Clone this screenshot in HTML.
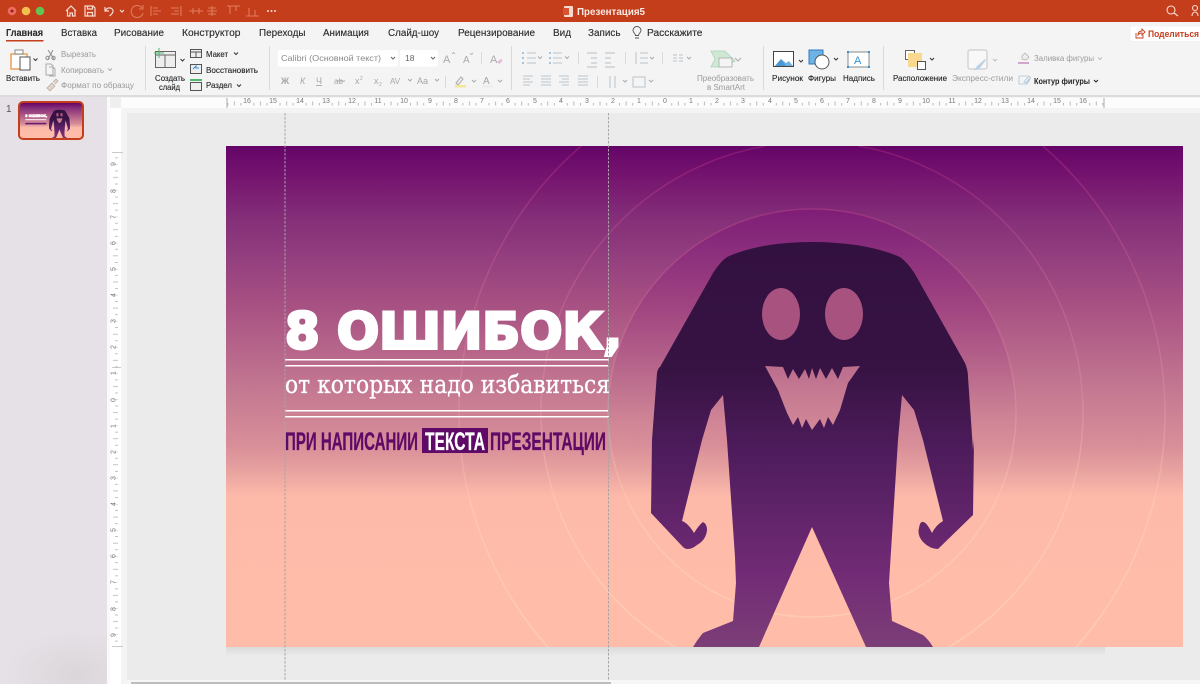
<!DOCTYPE html>
<html><head><meta charset="utf-8"><title>Презентация5</title>
<style>
html,body{margin:0;padding:0;width:1200px;height:684px;overflow:hidden;background:#ebebeb}
svg{display:block}
text{font-family:"Liberation Sans","Noto Sans CJK SC",sans-serif}
.t{font-size:10px;fill:#2a2a2a;stroke:#2a2a2a;stroke-width:.12}
.l{font-size:8px;fill:#222;stroke:#222;stroke-width:.1}
.g{font-size:8px;fill:#9a9a9a}
.n{font-size:7px;fill:#777}
.i{fill:none;stroke:#8f8f8f;stroke-width:1}
.b{fill:none;stroke:#b9c3cc;stroke-width:1}
</style></head><body>
<svg width="1200" height="684" viewBox="0 0 1200 684" xmlns="http://www.w3.org/2000/svg">
<defs>
<linearGradient id="bg" gradientUnits="userSpaceOnUse" x1="0" y1="146" x2="0" y2="647">
<stop offset="0" stop-color="#640467"/><stop offset=".06" stop-color="#75146f"/><stop offset=".15" stop-color="#853079"/><stop offset=".24" stop-color="#974280"/><stop offset=".31" stop-color="#a64f82"/><stop offset=".5" stop-color="#c67b92"/><stop offset=".6" stop-color="#d98f99"/><stop offset=".65" stop-color="#e8a3a0"/><stop offset=".7" stop-color="#fdbaa9"/><stop offset="1" stop-color="#ffbda9"/>
</linearGradient>
<linearGradient id="mg" gradientUnits="userSpaceOnUse" x1="0" y1="242" x2="0" y2="647">
<stop offset="0" stop-color="#32103f"/><stop offset=".32" stop-color="#371343"/><stop offset=".52" stop-color="#4e1c5c"/><stop offset=".82" stop-color="#722b76"/><stop offset="1" stop-color="#7b3e77"/>
</linearGradient>
<linearGradient id="disc" gradientUnits="userSpaceOnUse" x1="0" y1="208" x2="0" y2="420">
<stop offset="0" stop-color="#7a0078" stop-opacity=".3"/><stop offset="1" stop-color="#7a0078" stop-opacity="0"/>
</linearGradient>
<linearGradient id="rg" gradientUnits="userSpaceOnUse" x1="0" y1="146" x2="0" y2="647">
<stop offset="0" stop-color="#d0408a" stop-opacity=".3"/><stop offset=".5" stop-color="#eda0b0" stop-opacity=".28"/><stop offset=".72" stop-color="#ffd0b4" stop-opacity=".5"/><stop offset="1" stop-color="#ffd2b6" stop-opacity=".75"/>
</linearGradient>
<linearGradient id="sh" x1="0" y1="0" x2="0" y2="1"><stop offset="0" stop-color="#dadada"/><stop offset="1" stop-color="#ebebeb"/></linearGradient>
<radialGradient id="sm" gradientUnits="userSpaceOnUse" cx="0" cy="0" r="1" gradientTransform="translate(75 675) scale(70 45)"><stop offset="0" stop-color="#dbd6da"/><stop offset="1" stop-color="#e6e1e6"/></radialGradient>
<pattern id="hr" patternUnits="userSpaceOnUse" x="665.3" y="98" width="26.12" height="10">
<path d="M6.53 5v2.500M13.06 3.500v4M19.59 5v2.500" stroke="#a8a8a8" stroke-width=".8" fill="none"/>
</pattern>
<pattern id="vr" patternUnits="userSpaceOnUse" x="110" y="399.5" width="12" height="26.12">
<path d="M5 6.53h3M3 13.06h5M5 19.59h3M3 0h5" stroke="#b0b0b0" stroke-width=".8" fill="none"/>
</pattern>
<clipPath id="sc"><rect x="226" y="146" width="957" height="501"/></clipPath>
</defs>

<!-- base -->
<rect width="1200" height="684" fill="#f4f4f4"/>
<rect x="0" y="97" width="107" height="587" fill="#e6e1e6"/>
<rect x="0" y="625" width="107" height="59" fill="url(#sm)"/>
<rect x="107" y="97" width="3" height="587" fill="#fafafa"/>
<rect x="110" y="97" width="11" height="11" fill="#efefef"/>
<rect x="110" y="108" width="11" height="576" fill="#fff"/>
<rect x="121" y="98" width="1079" height="10" fill="#fcfcfc"/>
<rect x="127" y="113" width="1073" height="567" fill="#ebebeb"/>
<rect x="127" y="680" width="1073" height="4" fill="#f6f6f6"/>
<rect x="131" y="682" width="480" height="2" fill="#bdbdbd"/>

<!-- title bar -->
<rect width="1200" height="22" fill="#c43e1c"/>
<circle cx="12" cy="11" r="4.3" fill="#ec6a5e"/><circle cx="12" cy="11" r="1.4" fill="#8c1d18"/>
<circle cx="26" cy="11" r="4.3" fill="#f4bf4f"/><circle cx="40" cy="11" r="4.3" fill="#61c554"/>
<g fill="none" stroke="#f7dcd2" stroke-width="1.2">
<path d="M66 11l5-5 5 5M67.5 10v6h2.5v-3h2.5v3h2.5v-6"/>
<path d="M85 6h8l2 2v8h-10zM87.5 6v3h5V6M87.5 16v-3.5h5V16"/>
<path d="M105 7v4h4M105.5 10.5c2-4 8-3 7.5 1c-.3 2-2 3-3.500 4.500"/>
<path d="M120 10l2 2 2-2"/>
</g>
<g fill="none" stroke="#e07a5d" stroke-width="1.100">
<path d="M142 8a6 6 0 1 0 1 5M143 5v4h-4"/>
<path d="M151 6v10M153 8h5M153 11h8M153 14h5"/>
<path d="M181 6v10M171 8h8M174 11h5M171 14h8"/>
<path d="M189 11h14M193 8v6M199 8v6"/>
<path d="M212 6v10M208 8h8M208 14h8M207 11h10"/>
<path d="M227 6h13M230 6v8M236 6v5"/>
<path d="M246 16h13M249 8v8M255 10v6"/>
</g>
<g fill="#f7dcd2"><circle cx="268" cy="11" r="1"/><circle cx="271.500" cy="11" r="1"/><circle cx="275" cy="11" r="1"/></g>
<rect x="564" y="6" width="9" height="11" rx="1" fill="#f6d9cf"/><rect x="563" y="8" width="6" height="7" fill="#d9532e"/>
<text x="577" y="15" font-size="10" font-weight="700" fill="#fbe9e3" textLength="68" lengthAdjust="spacingAndGlyphs">Презентация5</text>
<g fill="none" stroke="#f7dcd2" stroke-width="1.100"><circle cx="1171" cy="10" r="4"/><path d="M1174 13l4 3"/><circle cx="1195" cy="8" r="2.500"/><path d="M1192 16c0-3 2-4 3-4s3 1 3 4"/></g>

<!-- ribbon -->
<rect y="22" width="1200" height="73" fill="#f4f4f4"/>
<rect y="95" width="1200" height="2" fill="#dcdcdc"/>
<text x="6" y="36" class="t" font-weight="700" textLength="37" lengthAdjust="spacingAndGlyphs">Главная</text>
<rect x="6" y="40" width="37.500" height="1.500" fill="#c43e1c"/>
<text x="61" y="36" class="t" textLength="36" lengthAdjust="spacingAndGlyphs">Вставка</text>
<text x="114" y="36" class="t" textLength="50" lengthAdjust="spacingAndGlyphs">Рисование</text>
<text x="182" y="36" class="t" textLength="58.500" lengthAdjust="spacingAndGlyphs">Конструктор</text>
<text x="259" y="36" class="t" textLength="46.500" lengthAdjust="spacingAndGlyphs">Переходы</text>
<text x="323" y="36" class="t" textLength="46" lengthAdjust="spacingAndGlyphs">Анимация</text>
<text x="388" y="36" class="t" textLength="51" lengthAdjust="spacingAndGlyphs">Слайд-шоу</text>
<text x="458" y="36" class="t" textLength="77" lengthAdjust="spacingAndGlyphs">Рецензирование</text>
<text x="553" y="36" class="t" textLength="18" lengthAdjust="spacingAndGlyphs">Вид</text>
<text x="588" y="36" class="t" textLength="32.500" lengthAdjust="spacingAndGlyphs">Запись</text>
<path d="M635 38h4M635.500 35.500c0-2-2.500-3-2.500-5a4 4 0 0 1 8 0c0 2-2.500 3-2.500 5z" fill="none" stroke="#555" stroke-width=".9"/>
<text x="647" y="36" class="t" textLength="55.500" lengthAdjust="spacingAndGlyphs">Расскажите</text>
<rect x="1130" y="26" width="72" height="15.500" rx="2" fill="#fff" stroke="#e9e9e9" stroke-width=".6"/>
<path d="M1136 33v5h7v-3M1138 35c0-3 2-4 4-4v-2l3 3-3 3v-2c-2 0-3 .5-4 2z" fill="none" stroke="#c43e1c" stroke-width=".9"/>
<text x="1148" y="37" font-size="9" font-weight="700" fill="#c43e1c" textLength="51" lengthAdjust="spacingAndGlyphs">Поделиться</text>

<g stroke="#d9d9d9" stroke-width="1"><path d="M145.500 46v44M269.500 46v44M511.500 46v44M763.500 46v44M883.500 46v44M481.500 52v12M578.500 52v12M625.500 52v12M662.500 52v12M445.500 76v12M597.500 76v12"/></g>

<!-- paste -->
<path d="M11 54h16v15H11z" fill="#fff" stroke="#e8a25a" stroke-width="1.500"/>
<rect x="15" y="50" width="8" height="4" fill="#fff" stroke="#888"/>
<rect x="20" y="57" width="10" height="13" fill="#fff" stroke="#555"/>
<path d="M33.500 58.500l2 2 2-2" fill="none" stroke="#333"/>
<text x="6" y="81" class="l" textLength="34" lengthAdjust="spacingAndGlyphs">Вставить</text>
<path d="M48 50l6 9M53 50l-5 9" class="i"/><circle cx="47.500" cy="58" r="1.700" class="i"/><circle cx="53.500" cy="58" r="1.700" class="i"/>
<path d="M46 64h5l2 2v9h-7zM49 67h4l2 2v7h-6" fill="none" stroke="#aaa"/>
<path d="M47 88l5-5 3 3-5 5zM53 82l3-3 2 2-3 3" fill="#e6d4c4" stroke="#aaa" stroke-width=".7"/>
<text x="61" y="57" class="g" textLength="35" lengthAdjust="spacingAndGlyphs">Вырезать</text>
<text x="61" y="73" class="g" textLength="43" lengthAdjust="spacingAndGlyphs">Копировать</text>
<path d="M108 68.500l2 2 2-2" fill="none" stroke="#aaa"/>
<text x="61" y="88" class="g" textLength="73" lengthAdjust="spacingAndGlyphs">Формат по образцу</text>

<!-- new slide -->
<rect x="155.500" y="51.500" width="20" height="16" fill="#eee" stroke="#666"/><path d="M155 55h21M165 55v12" stroke="#666" fill="none"/>
<path d="M159 48v10M154 53h10" stroke="#4fb86a" stroke-width="1" fill="none"/>
<path d="M180.500 59l2 2 2-2" fill="none" stroke="#333"/>
<text x="155" y="81" class="l" textLength="30" lengthAdjust="spacingAndGlyphs">Создать</text>
<text x="159" y="90" class="l" textLength="21" lengthAdjust="spacingAndGlyphs">слайд</text>
<rect x="190.500" y="49.500" width="11" height="8" fill="#eee" stroke="#555"/><path d="M191 52h10M196 52v5" stroke="#555" fill="none"/>
<rect x="190.500" y="64.500" width="11" height="9" fill="#eee" stroke="#555"/><path d="M193 69l3-3v2h3" stroke="#3a8fd0" fill="none"/>
<rect x="190.500" y="82.500" width="11" height="8" fill="#eee" stroke="#555"/><rect x="190" y="79" width="12" height="2" fill="#4fb86a"/>
<text x="206" y="57" class="l" textLength="22" lengthAdjust="spacingAndGlyphs">Макет</text>
<path d="M234 52.500l2 2 2-2" fill="none" stroke="#333"/>
<text x="206" y="73" class="l" textLength="52" lengthAdjust="spacingAndGlyphs">Восстановить</text>
<text x="206" y="88" class="l" textLength="26" lengthAdjust="spacingAndGlyphs">Раздел</text>
<path d="M237 84.500l2 2 2-2" fill="none" stroke="#333"/>

<!-- font -->
<rect x="278" y="50" width="120" height="16.500" rx="2" fill="#fff"/>
<text x="281" y="61" font-size="8.500" fill="#8a8a8a" textLength="100" lengthAdjust="spacingAndGlyphs">Calibri (Основной текст)</text>
<path d="M391 57l2 2 2-2" fill="none" stroke="#666"/>
<rect x="400" y="50" width="38" height="16.500" rx="2" fill="#fff"/>
<text x="405" y="61" font-size="8.500" fill="#666">18</text>
<path d="M431 57l2 2 2-2" fill="none" stroke="#666"/>
<text x="443" y="63" font-size="11" fill="#aaa">A</text><text x="463" y="63" font-size="10" fill="#aaa">A</text>
<path d="M452 54l1.500-1.500 1.500 1.500M470 53l1.500 1.500 1.500-1.500" fill="none" stroke="#aaa" stroke-width=".8"/>
<text x="490" y="63" font-size="11" fill="#aaa">A</text><path d="M497 62l4-3 1.500 1.500-3 3.500z" fill="#e7b7d8"/>
<g font-size="9" fill="#a6a6a6">
<text x="281" y="84" font-weight="700">Ж</text><text x="300" y="84" font-style="italic">К</text><text x="316" y="84" text-decoration="underline">Ч</text><text x="334" y="84" font-size="8">ab</text><text x="355" y="84">x</text><text x="360" y="80" font-size="5">2</text><text x="374" y="84">x</text><text x="379" y="86" font-size="5">2</text><text x="390" y="84" font-size="8">AV</text><text x="417" y="84">Aa</text>
<text x="483" y="84" font-size="10">A</text>
</g>
<path d="M336 81h9" stroke="#aaa" fill="none"/>
<path d="M408 79l2 2 2-2M435 79l2 2 2-2M472 80l2 2 2-2M498 80l2 2 2-2" fill="none" stroke="#aaa"/>
<path d="M456 83l5-6 2 2-5 6z" fill="none" stroke="#aaa"/><rect x="455" y="85" width="11" height="2.500" fill="#f2e79a"/>
<rect x="482" y="85" width="11" height="2.500" fill="#eee"/>

<!-- paragraph -->
<g class="b">
<path d="M527 53h9M527 58h9M527 63h9M553 53h9M553 58h9M553 63h9"/>
<path d="M587 53h10M591 58h6M591 63h6M587 67h10M605 53h10M605 58h6M605 63h6M605 67h10" stroke="#b5bec6"/>
<path d="M640 53h8M640 58h8M640 63h8M636 52v12"/>
<path d="M673 55h4M679 55h4M673 58h4M679 58h4M673 61h4M679 61h4"/>
<path d="M523 76h10M523 79h7M523 82h10M523 85h7M541 76h10M541 79h10M541 82h10M541 85h10M559 76h10M562 79h7M559 82h10M562 85h7M578 76h10M578 79h10M578 82h10M578 85h10"/>
<path d="M610 76v12M615 76v12M633 77h12v10h-12z"/>
</g>
<g fill="#7fb7de"><circle cx="523" cy="53" r="1"/><circle cx="523" cy="58" r="1"/><circle cx="523" cy="63" r="1"/><circle cx="550" cy="53" r="1"/><circle cx="550" cy="58" r="1"/><circle cx="550" cy="63" r="1"/></g>
<path d="M538 56.500l2 2 2-2M565 56.500l2 2 2-2M650 57l2 2 2-2M687 57l2 2 2-2M623 80l2 2 2-2M649 80l2 2 2-2" fill="none" stroke="#aaa"/>
<path d="M711 51h14l10 10-10 6h-14l4-8z" fill="#cfe8d4" stroke="#a9d4b4" stroke-width=".8"/>
<rect x="719" y="58" width="13" height="9" fill="#f4f4f4" stroke="#aaa" stroke-width=".8"/>
<path d="M735 58l3 3 3-3" fill="none" stroke="#aaa"/>
<text x="697" y="81" class="g" textLength="57" lengthAdjust="spacingAndGlyphs">Преобразовать</text>
<text x="707" y="90" class="g" textLength="38" lengthAdjust="spacingAndGlyphs">в SmartArt</text>

<!-- insert -->
<rect x="773.500" y="51.500" width="20" height="15" fill="#fff" stroke="#444"/>
<path d="M775 66l6-7 5 4 3-2 4 5z" fill="#6eb2e6"/><path d="M775 66l6-7 5 7z" fill="#4a97d4"/>
<path d="M799 60l2 2 2-2" fill="none" stroke="#333"/>
<text x="772" y="81" class="l" textLength="31" lengthAdjust="spacingAndGlyphs">Рисунок</text>
<rect x="809" y="50" width="14" height="14" fill="#6eb2e6" stroke="#2a7cc0"/>
<circle cx="822" cy="62" r="7" fill="#fff" stroke="#555"/>
<path d="M834 58l2 2 2-2" fill="none" stroke="#333"/>
<text x="808" y="81" class="l" textLength="28" lengthAdjust="spacingAndGlyphs">Фигуры</text>
<rect x="848" y="52" width="21" height="15" fill="#fff" stroke="#888"/>
<g fill="#3a8fd0"><rect x="847" y="51" width="2" height="2"/><rect x="868" y="51" width="2" height="2"/><rect x="847" y="66" width="2" height="2"/><rect x="868" y="66" width="2" height="2"/></g>
<text x="854" y="64" font-size="11" fill="#3a8fd0">A</text>
<text x="843" y="81" class="l" textLength="32" lengthAdjust="spacingAndGlyphs">Надпись</text>

<!-- arrange -->
<rect x="905.500" y="50.500" width="9" height="9" fill="#fff" stroke="#666"/>
<rect x="908" y="53" width="14" height="14" fill="#fbd890"/>
<rect x="917.500" y="61.500" width="8" height="8" fill="#fff" stroke="#555"/>
<path d="M930 58l2 2 2-2" fill="none" stroke="#333"/>
<text x="893" y="81" class="l" textLength="54" lengthAdjust="spacingAndGlyphs">Расположение</text>
<rect x="968" y="50" width="19" height="19" rx="2" fill="#f8f8f8" stroke="#c4c4c4"/>
<path d="M974 70l3-4 8-7 1 1-6 8-3 2z" fill="#bcd2e6"/>
<path d="M993 59l2 2 2-2" fill="none" stroke="#bbb"/>
<text x="952" y="81" class="g" textLength="61" lengthAdjust="spacingAndGlyphs">Экспресс-стили</text>
<path d="M1022 56l3-3 4 4-3 3-4-1z" fill="#eee" stroke="#aaa" stroke-width=".7"/><rect x="1018" y="62" width="11" height="2" fill="#d3a5cf"/>
<text x="1034" y="61" class="g" textLength="60" lengthAdjust="spacingAndGlyphs">Заливка фигуры</text>
<path d="M1098 57.500l2 2 2-2" fill="none" stroke="#bbb"/>
<path d="M1019 76h9M1019 76v8h8l3-5M1024 82l5-6 1.500 1.500-4.500 5.500z" fill="none" stroke="#a9c2d8" stroke-width=".8"/>
<text x="1034" y="84" font-size="8" fill="#222" font-weight="700" textLength="56" lengthAdjust="spacingAndGlyphs">Контур фигуры</text>
<path d="M1094 80l2 2 2-2" fill="none" stroke="#222"/>

<!-- rulers -->
<rect x="227" y="98" width="877" height="10" fill="url(#hr)"/>
<path d="M227 98v10M1104 98v10" stroke="#999" stroke-width=".8"/>
<g class="n" text-anchor="middle">
<text x="247" y="103">16</text><text x="273" y="103">15</text><text x="300" y="103">14</text><text x="326" y="103">13</text><text x="352" y="103">12</text><text x="378" y="103">11</text><text x="404" y="103">10</text><text x="430" y="103">9</text><text x="456" y="103">8</text><text x="482" y="103">7</text><text x="508" y="103">6</text><text x="535" y="103">5</text><text x="561" y="103">4</text><text x="587" y="103">3</text><text x="613" y="103">2</text><text x="639" y="103">1</text><text x="665" y="103">0</text><text x="691" y="103">1</text><text x="717" y="103">2</text><text x="743" y="103">3</text><text x="770" y="103">4</text><text x="796" y="103">5</text><text x="822" y="103">6</text><text x="848" y="103">7</text><text x="874" y="103">8</text><text x="900" y="103">9</text><text x="926" y="103">10</text><text x="952" y="103">11</text><text x="978" y="103">12</text><text x="1005" y="103">13</text><text x="1031" y="103">14</text><text x="1057" y="103">15</text><text x="1083" y="103">16</text>
</g>
<rect x="110" y="152" width="11" height="494" fill="url(#vr)"/>
<path d="M112 152.500h11M112 646.500h11M112 367.500h9" stroke="#bbb" stroke-width=".8"/>
<g class="n" text-anchor="middle">
<text transform="translate(115.500 164) rotate(-90)">9</text><text transform="translate(115.500 191) rotate(-90)">8</text><text transform="translate(115.500 217) rotate(-90)">7</text><text transform="translate(115.500 243) rotate(-90)">6</text><text transform="translate(115.500 269) rotate(-90)">5</text><text transform="translate(115.500 295) rotate(-90)">4</text><text transform="translate(115.500 321) rotate(-90)">3</text><text transform="translate(115.500 347) rotate(-90)">2</text><text transform="translate(115.500 373) rotate(-90)">1</text><text transform="translate(115.500 400) rotate(-90)">0</text><text transform="translate(115.500 426) rotate(-90)">1</text><text transform="translate(115.500 452) rotate(-90)">2</text><text transform="translate(115.500 478) rotate(-90)">3</text><text transform="translate(115.500 504) rotate(-90)">4</text><text transform="translate(115.500 530) rotate(-90)">5</text><text transform="translate(115.500 556) rotate(-90)">6</text><text transform="translate(115.500 582) rotate(-90)">7</text><text transform="translate(115.500 609) rotate(-90)">8</text><text transform="translate(115.500 635) rotate(-90)">9</text>
</g>

<!-- thumbnail -->
<text x="6" y="112" font-size="10" fill="#555">1</text>
<g transform="translate(21.500 103) scale(.0648 .0699) translate(-226 -146)">
<rect x="202" y="146" width="957" height="501" fill="url(#bg)"/>
<path fill="url(#mg)" d="M727 257Q760 242 812 242Q865 242 900 257L965 363L973 450L974 515L938 549L919 528L932 533L943 521L923 440L902 395L898 440L889 583L892 621L933 647H866L812 527L759 647H693L733 621L736 583L727 440L723 395L702 440L682 521L694 533L707 530L688 549L651 513L652 440L660 367Z"/>
<ellipse cx="781" cy="314" rx="19" ry="26" fill="#a8527f"/><ellipse cx="844" cy="314" rx="19" ry="26" fill="#a8527f"/>
<path d="M765 366H860L833 425L812 430L793 425Z" fill="#c67b92"/>
<text x="284" y="350" font-size="50" font-weight="700" fill="#fff" style="font-family:'DejaVu Sans',sans-serif" textLength="339" lengthAdjust="spacingAndGlyphs" stroke="#fff" stroke-width="8">8 ОШИБОК,</text>
<rect x="285" y="375" width="324" height="18" fill="#f3dfe6"/>
<rect x="285" y="430" width="324" height="22" fill="#6a1a6e"/>
</g>
<rect x="19" y="102" width="64" height="37" rx="4" fill="none" stroke="#c43e1c" stroke-width="2"/>

<!-- shadow -->
<rect x="226" y="647" width="879" height="9" fill="url(#sh)"/>

<!-- slide -->
<g clip-path="url(#sc)">
<rect x="226" y="146" width="957" height="501" fill="url(#bg)"/>
<path d="M581.100 146A353 353 0 0 0 547.700 647M1042.900 146A353 353 0 0 1 1076.300 647" fill="none" stroke="url(#rg)" stroke-width="1.500"/>
<path d="M765.600 146A271 271 0 0 0 675.300 647M858.400 146A271 271 0 0 1 948.700 647" fill="none" stroke="url(#rg)" stroke-width="1.500"/>
<circle cx="812" cy="413" r="204" fill="url(#disc)"/>
<circle cx="812" cy="413" r="204" fill="none" stroke="url(#rg)" stroke-width="1.500"/>
<path fill="url(#mg)" d="M727 257Q760 242 812 242Q865 242 900 257Q908 263 915 274L965 363Q968 370 968 377L973 450L974 440L973 515L938 549Q930 549 923 542Q917 535 919 528Q920 522 922 522Q926 521 932 533Q936 525 943 521L923 440L914 410L902 395L898 440L889 583L892 621L923 635Q929 640 933 647H866L812 527L759 647H693Q697 640 703 633L733 621L736 583L735 557L727 440L723 395L711 410L702 440L682 521Q688 523 694 533Q699 525 703 522Q707 524 707 530Q706 540 697 545Q692 549 688 549Q685 549 683 547L651 513L652 440L657 373Q658 368 660 367L713 273Q720 262 727 257Z"/>
<ellipse cx="781" cy="314" rx="19" ry="26" fill="#a8527f"/><ellipse cx="844" cy="314" rx="19" ry="26" fill="#a8527f"/>
<path fill="url(#bg)" d="M765 366L783 367L788 379L793 369L799 379L805 369L809 379L812 368L816 379L820 368L826 379L832 368L838 379L843 367L860 366L848 383L840 410L833 425L828 417L824 428L820 419L812 430L806 419L802 428L798 417L793 425L787 413L778 390Z"/>

<text x="285" y="348.500" font-size="50" font-weight="700" fill="#fff" stroke="#fff" stroke-width="3" style="font-family:'DejaVu Sans',sans-serif" textLength="337" lengthAdjust="spacingAndGlyphs">8 ОШИБОК,</text>
<rect x="285" y="359" width="324" height="1.500" fill="#fff"/><rect x="285" y="365" width="324" height="1.500" fill="#fff"/>
<text x="285" y="393" font-size="25" fill="#fff" stroke="#fff" stroke-width=".3" style="font-family:'DejaVu Serif',serif" textLength="325" lengthAdjust="spacingAndGlyphs">от которых надо избавиться</text>
<rect x="285" y="410" width="324" height="1.500" fill="#fff"/><rect x="285" y="416" width="324" height="1.500" fill="#fff"/>
<text x="285" y="450" font-size="25" font-weight="700" fill="#5e0a66" stroke="#5e0a66" stroke-width=".3" textLength="133" lengthAdjust="spacingAndGlyphs">ПРИ НАПИСАНИИ</text>
<rect x="422" y="428" width="66" height="25" fill="#5e0a66"/>
<text x="425" y="450" font-size="25" font-weight="700" fill="#fff" stroke="#fff" stroke-width=".3" textLength="60" lengthAdjust="spacingAndGlyphs">ТЕКСТА</text>
<text x="490" y="450" font-size="25" font-weight="700" fill="#5e0a66" stroke="#5e0a66" stroke-width=".3" textLength="116" lengthAdjust="spacingAndGlyphs">ПРЕЗЕНТАЦИИ</text>
</g>

<!-- guides -->
<path d="M285 113V680M608.500 113V680" stroke="#a5a5a5" stroke-width="1" stroke-dasharray="2.500 1.500" fill="none"/>
</svg>
</body></html>
